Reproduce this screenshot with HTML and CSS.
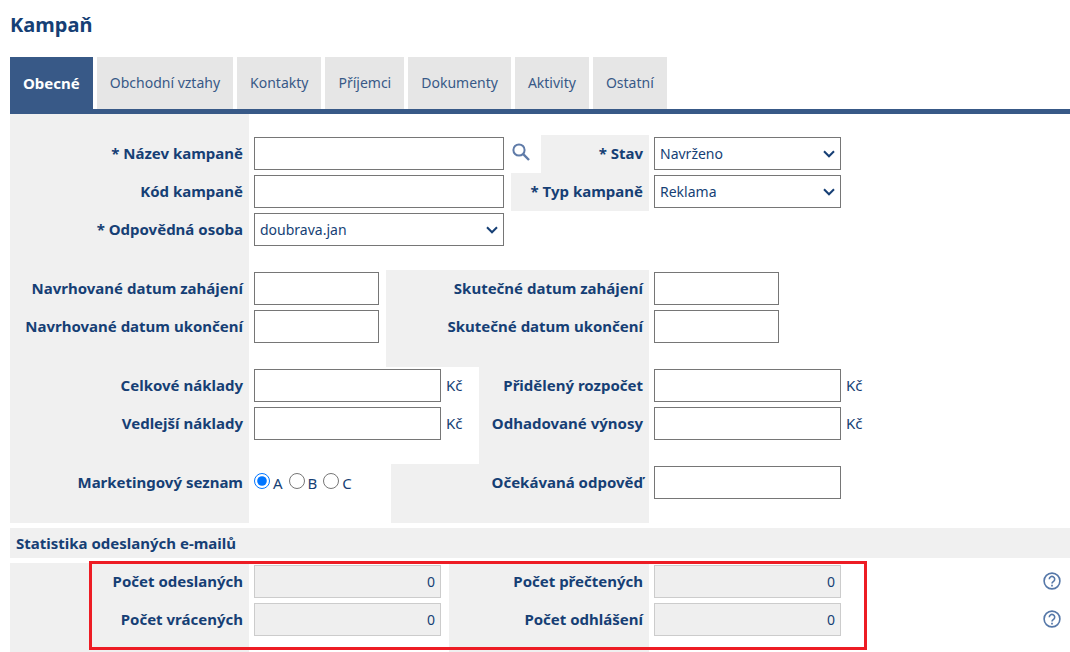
FILE: index.html
```html
<!DOCTYPE html>
<html lang="cs">
<head>
<meta charset="utf-8">
<title>Kampaň</title>
<link rel="stylesheet" href="styles.css">
</head>
<body>
<svg class="sprite" aria-hidden="true">
  <symbol id="chevron" viewBox="0 0 12 8"><path d="M1 1.3 6 6.3 11 1.3" fill="none" stroke="#163f75" stroke-width="2"/></symbol>
  <symbol id="search" viewBox="0 0 18 18"><circle cx="7" cy="7" r="5.6" fill="none" stroke="#5f7ba8" stroke-width="2"/><path d="M11.2 11.2 17 17" stroke="#5f7ba8" stroke-width="2.4"/></symbol>
  <symbol id="help" viewBox="0 0 18 18"><circle cx="9" cy="9" r="7.9" fill="none" stroke="#5577a8" stroke-width="1.6"/><path d="M6.3 7.2a2.7 2.7 0 1 1 4.3 2.1C9.6 10 9 10.400 9 11.500" fill="none" stroke="#5577a8" stroke-width="1.6"/><path d="M9 12.700v1.700" stroke="#5577a8" stroke-width="1.7"/></symbol>
</svg>
<h1 class="title">Kampaň</h1>
<nav class="tabs">
  <a class="tab active" href="#">Obecné</a>
  <a class="tab" href="#">Obchodní vztahy</a>
  <a class="tab" href="#">Kontakty</a>
  <a class="tab" href="#">Příjemci</a>
  <a class="tab" href="#">Dokumenty</a>
  <a class="tab" href="#">Aktivity</a>
  <a class="tab" href="#">Ostatní</a>
</nav>
<form class="form">
  <div class="group first">
    <div class="row">
      <label class="label" for="nazev">* Název kampaně</label>
      <div class="middle">
        <div class="control"><input class="box wide" id="nazev" type="text"><button class="search" type="button" aria-label="Hledat"><svg width="18" height="18"><use href="#search"/></svg></button></div>
        <label class="label" for="stav">* Stav</label>
      </div>
      <div class="control"><span class="pick"><select class="box medium" id="stav"><option>Navrženo</option></select><svg class="arrow" width="12" height="8"><use href="#chevron"/></svg></span></div>
    </div>
    <div class="row">
      <label class="label" for="kod">Kód kampaně</label>
      <div class="middle">
        <div class="control"><input class="box wide" id="kod" type="text"></div>
        <label class="label" for="typ">* Typ kampaně</label>
      </div>
      <div class="control"><span class="pick"><select class="box medium" id="typ"><option>Reklama</option></select><svg class="arrow" width="12" height="8"><use href="#chevron"/></svg></span></div>
    </div>
    <div class="row last">
      <label class="label" for="osoba">* Odpovědná osoba</label>
      <div class="middle">
        <div class="control"><span class="pick"><select class="box wide" id="osoba"><option>doubrava.jan</option></select><svg class="arrow" width="12" height="8"><use href="#chevron"/></svg></span></div>
      </div>
    </div>
  </div>
  <div class="group">
    <div class="row">
      <label class="label" for="nz">Navrhované datum zahájení</label>
      <div class="middle">
        <div class="control"><input class="box small" id="nz" type="text"></div>
        <label class="label" for="sz">Skutečné datum zahájení</label>
      </div>
      <div class="control"><input class="box small" id="sz" type="text"></div>
    </div>
    <div class="row last">
      <label class="label" for="nu">Navrhované datum ukončení</label>
      <div class="middle">
        <div class="control"><input class="box small" id="nu" type="text"></div>
        <label class="label" for="su">Skutečné datum ukončení</label>
      </div>
      <div class="control"><input class="box small" id="su" type="text"></div>
    </div>
  </div>
  <div class="group">
    <div class="row">
      <label class="label" for="cn">Celkové náklady</label>
      <div class="middle">
        <div class="control money"><input class="box medium" id="cn" type="text"><span class="unit">Kč</span></div>
        <label class="label" for="pr">Přidělený rozpočet</label>
      </div>
      <div class="control"><input class="box medium" id="pr" type="text"><span class="unit">Kč</span></div>
    </div>
    <div class="row last">
      <label class="label" for="vn">Vedlejší náklady</label>
      <div class="middle">
        <div class="control money"><input class="box medium" id="vn" type="text"><span class="unit">Kč</span></div>
        <label class="label" for="ov">Odhadované výnosy</label>
      </div>
      <div class="control"><input class="box medium" id="ov" type="text"><span class="unit">Kč</span></div>
    </div>
  </div>
  <div class="group">
    <div class="row last">
      <span class="label" id="seznam">Marketingový seznam</span>
      <div class="middle">
        <div class="control radios" role="radiogroup" aria-labelledby="seznam">
          <label class="option"><input class="radio" type="radio" name="seznam" checked><span>A</span></label>
          <label class="option"><input class="radio" type="radio" name="seznam"><span>B</span></label>
          <label class="option"><input class="radio" type="radio" name="seznam"><span>C</span></label>
        </div>
        <label class="label" for="oo">Očekávaná odpověď</label>
      </div>
      <div class="control"><input class="box medium" id="oo" type="text"></div>
    </div>
  </div>
  <h2 class="section">Statistika odeslaných e-mailů</h2>
  <div class="group stats">
    <div class="row">
      <label class="label" for="po">Počet odeslaných</label>
      <div class="middle">
        <div class="control"><input class="box medium count" id="po" type="text" value="0" readonly></div>
        <label class="label" for="pp">Počet přečtených</label>
      </div>
      <div class="control"><input class="box medium count" id="pp" type="text" value="0" readonly></div>
      <button class="help" type="button" aria-label="Nápověda"><svg width="18" height="18"><use href="#help"/></svg></button>
    </div>
    <div class="row last">
      <label class="label" for="pv">Počet vrácených</label>
      <div class="middle">
        <div class="control"><input class="box medium count" id="pv" type="text" value="0" readonly></div>
        <label class="label" for="ph">Počet odhlášení</label>
      </div>
      <div class="control"><input class="box medium count" id="ph" type="text" value="0" readonly></div>
      <button class="help" type="button" aria-label="Nápověda"><svg width="18" height="18"><use href="#help"/></svg></button>
    </div>
    <div class="highlight"></div>
  </div>
</form>
</body>
</html>
```
FILE: styles.css
```css
* { box-sizing: border-box; }

body {
  margin: 0;
  padding: 9px 0 0 10px;
  background: #fff;
  color: #163f75;
  font: 15px/20px "Noto Sans", sans-serif;
}

input, select, button { font: inherit; color: inherit; }
svg { display: block; }
.sprite { position: absolute; width: 0; height: 0; }

.title { margin: 0 0 16px; font-size: 20px; line-height: 32px; font-weight: 700; }

.tabs { display: flex; gap: 4px; border-bottom: 5px solid #385987; }
.tab {
  padding: 16px 13px;
  background: #e6e6e6;
  color: #385987;
  font-size: 14px;
  text-decoration: none;
}
.tab.active { background: #385987; color: #fff; font-size: 15px; font-weight: 700; }

.group { background: linear-gradient(to right, #f0f0f0 239px, transparent 239px); }
.first { padding-top: 21px; }
.row { display: flex; }
.label {
  flex: 0 0 239px;
  padding: 8px 6px 10px 0;
  background: #f0f0f0;
  text-align: right;
  font-weight: 700;
}
.middle { display: flex; flex: 0 0 400px; }
.middle .label { flex: 1; }
.last .label { padding-bottom: 31px; }
.stats .last .label { padding-bottom: 23px; }

.control { display: flex; align-items: flex-start; padding: 2px 7px 0 5px; }
.stats .control { padding-right: 8px; }
.box {
  height: 33px;
  padding: 0 5px;
  border: 1px solid #767676;
  border-radius: 0;
  background: #fff;
  font-size: 14px;
  outline: 0;
}
.wide { width: 250px; }
.medium { width: 187px; }
.small { width: 125px; }
.count { background: #efefef; border-color: #ccc; text-align: right; }

.pick { display: grid; align-items: center; }
.pick > * { grid-area: 1 / 1; }
.pick select { appearance: none; }
.arrow { justify-self: end; margin-right: 6px; pointer-events: none; }

.search, .help { border: 0; background: none; padding: 0; }
.search { padding: 6px 4px 0 8px; }
.help { align-self: flex-start; margin: 9px 9px 0 auto; }

.unit { padding: 6px 0 0 5px; }
.money { width: 230px; }

.radios { width: 142px; padding-top: 9px; gap: 6px; }
.option { display: flex; gap: 3px; }
.radio { width: 16px; height: 16px; margin: 0; }

.section {
  margin: 5px 0;
  padding: 5px 6px;
  background: #f0f0f0;
  font-size: 15px;
  line-height: 20px;
}

.stats { position: relative; }
.highlight {
  position: absolute;
  top: -2px;
  bottom: 2px;
  left: 79px;
  width: 778px;
  border: 3px solid #ed1c24;
  pointer-events: none;
}
```
